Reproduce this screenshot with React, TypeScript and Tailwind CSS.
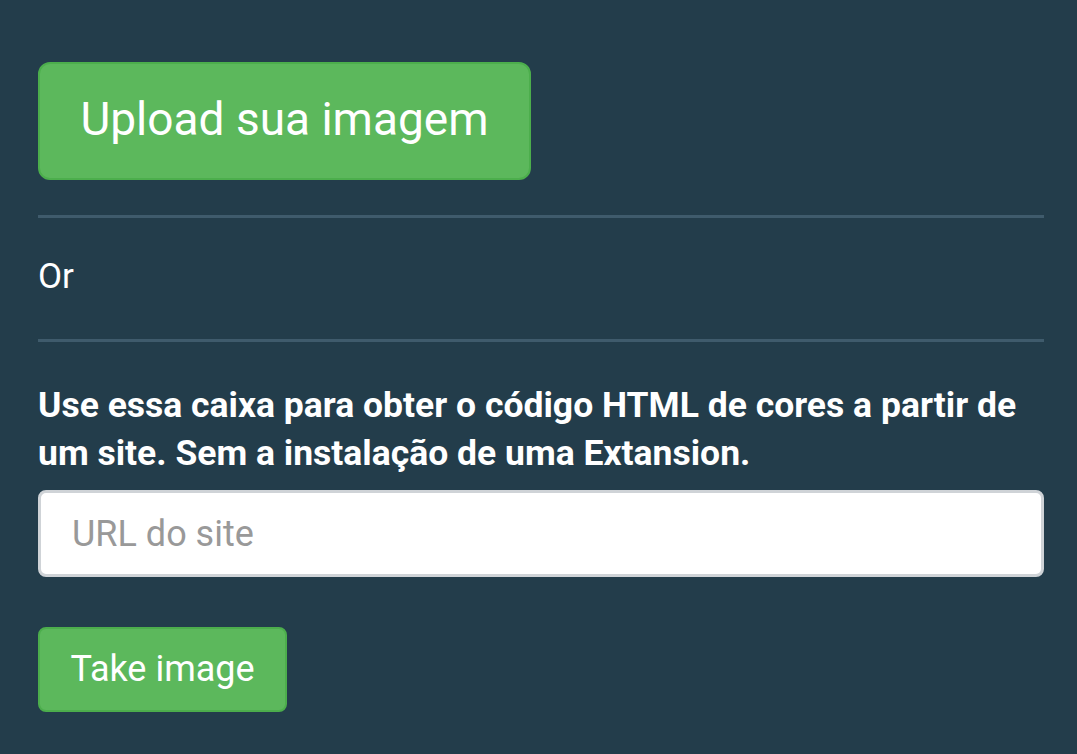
export default function App() {
  return (
    <div
      className="min-h-screen w-full bg-[#233d4b] text-white"
      style={{ fontFamily: 'Roboto, "Noto Sans", sans-serif' }}
    >
      <div className="pl-[38px] pr-[33px] pt-[62px]">
        <button className="h-[118px] w-[493px] rounded-[12px] border-2 border-[#4cae4c] bg-[#5cb85c] pb-[4px] text-[46px] leading-none text-white">
          Upload sua imagem
        </button>

        <hr className="mt-[35px] border-t-[3px] border-[#3f5b6c]" />

        <p className="mb-[44px] mt-[41px] text-[35px] leading-[36px]">Or</p>

        <hr className="border-t-[3px] border-[#3f5b6c]" />

        <p className="mt-[39px] text-[35.5px] font-bold leading-[48px]">
          Use essa caixa para obter o código HTML de cores a partir de um site. Sem a instalação de uma Extansion.
        </p>

        <input
          type="text"
          placeholder="URL do site"
          className="mt-[13px] block h-[87px] w-full rounded-[8px] border-[3px] border-[#cfd3d7] bg-white px-[31px] text-[36px] text-[#555] outline-none placeholder:text-[#999]"
        />

        <button className="mt-[50px] h-[85px] w-[249px] rounded-[8px] border-2 border-[#4cae4c] bg-[#5cb85c] pb-[2px] text-[36px] leading-none text-white">
          Take image
        </button>
      </div>
    </div>
  );
}
